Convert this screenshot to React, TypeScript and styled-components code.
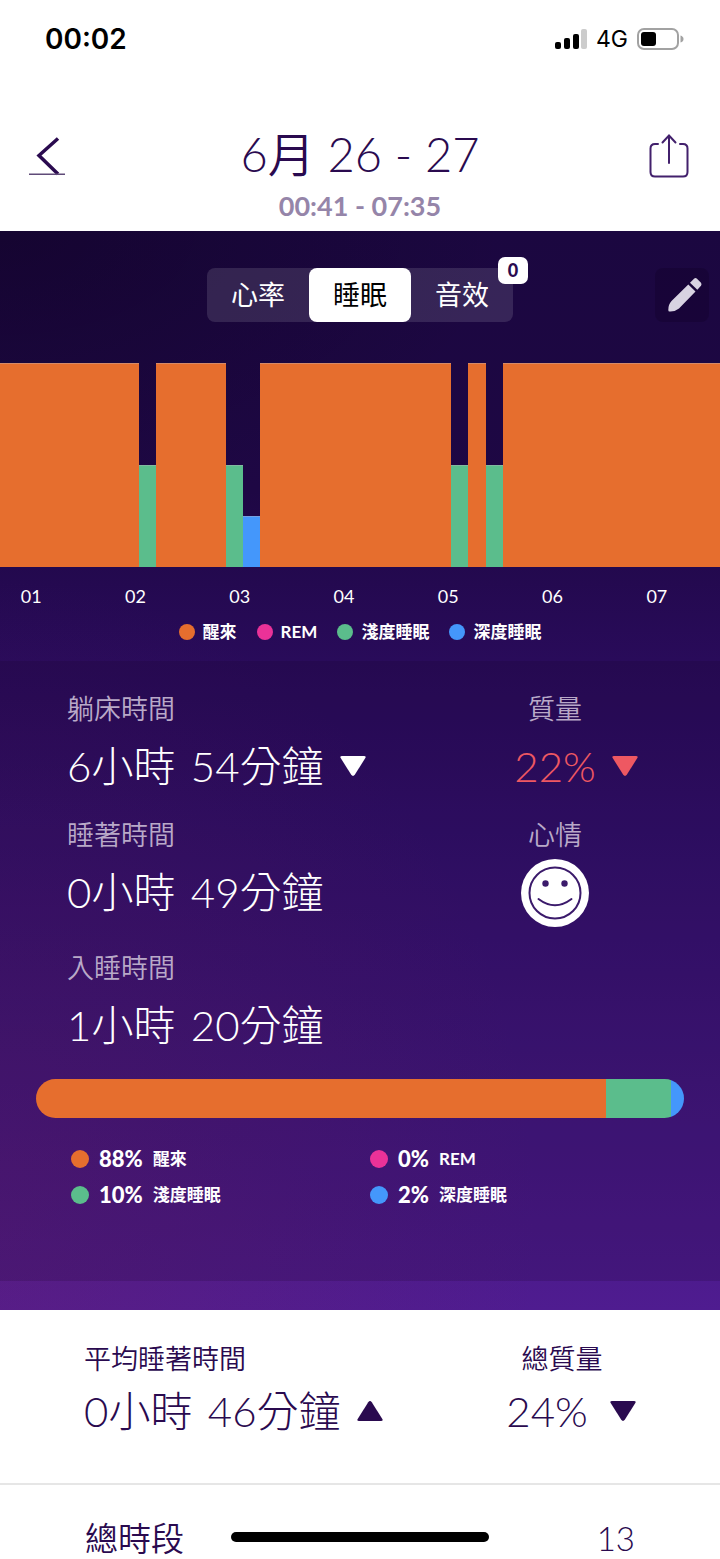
import React from "react";
import styled, { createGlobalStyle } from "styled-components";

const color = {
  ink: "#2a0a4f",
  awake: "#e66e2e",
  rem: "#ea3298",
  light: "#5bbd8c",
  deep: "#4497fb",
  alert: "#ee5862",
};

const GlobalStyle = createGlobalStyle`
  *, *::before, *::after { box-sizing: border-box; }
  body {
    margin: 0;
    background: #fff;
    color: ${color.ink};
    font-family: Lato, "Noto Sans CJK TC", sans-serif;
  }
  h1, p, dl, dt, dd, ul { margin: 0; padding: 0; }
  ul { list-style: none; }
  button { font: inherit; border: 0; padding: 0; background: none; color: inherit; cursor: pointer; }
  svg { display: block; }
`;

const Screen = styled.div`
  position: relative;
  min-width: 560px;
  overflow: hidden;
`;

const StatusBar = styled.div`
  display: flex;
  align-items: center;
  justify-content: space-between;
  height: 78px;
  padding: 0 36px 0 45px;
  color: #000;
  font-family: Inter, sans-serif;
`;

const Clock = styled.span`
  font-size: 28px;
  font-weight: 600;
`;

const StatusIcons = styled.div`
  display: flex;
  align-items: center;
  gap: 9px;
  font-size: 23px;
`;

const Header = styled.header`
  display: grid;
  grid-template-columns: 80px 1fr 72px;
  height: 153px;
  padding: 44px 15px 0 7px;
  justify-items: center;
  align-items: start;
`;

const IconButton = styled.button`
  display: flex;
  align-items: center;
  justify-content: center;
  width: 56px;
  height: 68px;
`;

const Heading = styled.div`
  text-align: center;
`;

const Title = styled.h1`
  font-size: 47px;
  line-height: 64px;
  font-weight: 350;
`;

const Period = styled.p`
  margin-top: 4px;
  font-size: 27px;
  line-height: 32px;
  font-weight: 700;
  color: #9585a9;
`;

const Night = styled.main`
  background:
    radial-gradient(ellipse 75% 60% at 0 92%, rgba(125, 35, 95, 0.2), rgba(125, 35, 95, 0)),
    radial-gradient(ellipse 70% 25% at 0 0, rgba(10, 0, 20, 0.35), rgba(10, 0, 20, 0)),
    linear-gradient(180deg, #1b0740 0, #1e0744 260px, #290b5a 430px, #32106c 600px, #42177f 850px, #4f1c90 1080px);
`;

const Toolbar = styled.div`
  display: grid;
  grid-template-columns: 1fr auto 1fr;
  align-items: center;
  padding: 37px 11px 41px;
`;

const Tabs = styled.div`
  position: relative;
  grid-column: 2;
  display: flex;
  border-radius: 8px;
  background: rgba(255, 255, 255, 0.12);
`;

const Tab = styled.button<{ $active?: boolean }>`
  width: 102px;
  height: 54px;
  border-radius: 8px;
  font-size: 27px;
  line-height: 54px;
  color: ${(p) => (p.$active ? "#000" : "#fff")};
  background: ${(p) => (p.$active ? "#fff" : "transparent")};
`;

const Badge = styled.span`
  position: absolute;
  top: -11px;
  right: -15px;
  width: 30px;
  height: 27px;
  border-radius: 7px;
  background: #fff;
  color: ${color.ink};
  font-size: 18px;
  line-height: 26px;
  font-weight: 900;
  text-align: center;
`;

const EditButton = styled.button`
  display: flex;
  align-items: center;
  justify-content: center;
  justify-self: end;
  width: 54px;
  height: 54px;
  border-radius: 8px;
  background: rgba(15, 0, 35, 0.3);
`;

const Chart = styled.div`
  display: flex;
  align-items: flex-end;
  height: 204px;
`;

const Stage = styled.div<{ $span: number; $level: number; $fill: string }>`
  flex: ${(p) => p.$span} 0 0;
  height: ${(p) => p.$level}%;
  background: ${(p) => p.$fill};
  box-shadow: inset 0 1px rgba(190, 180, 190, 0.4);
`;

const Hours = styled.div`
  display: flex;
  margin: 16px 11px 0 -21px;
  color: #fff;
  font-size: 18px;
  line-height: 26px;
`;

const Hour = styled.span`
  flex: 1 0 0;
  text-align: center;
`;

const Legend = styled.ul`
  display: flex;
  justify-content: center;
  gap: 20px;
  margin-top: 10px;
  padding-bottom: 16px;
`;

const LegendItem = styled.li`
  display: flex;
  align-items: center;
  gap: 8px;
  color: #fff;
  font-size: 17px;
  line-height: 26px;
  font-weight: 700;
`;

const Dot = styled.span<{ $fill: string; $size: number }>`
  flex: none;
  width: ${(p) => p.$size}px;
  height: ${(p) => p.$size}px;
  border-radius: 50%;
  background: ${(p) => p.$fill};
`;

const Details = styled.section`
  padding: 30px 0 72px;
  background: rgba(20, 0, 30, 0.16);
`;

const Stats = styled.dl<{ $inset: number }>`
  display: grid;
  grid-template-columns: 1fr 330px;
  row-gap: 23px;
  padding-left: ${(p) => p.$inset}px;
`;

const Stat = styled.div<{ $centered?: boolean }>`
  text-align: ${(p) => (p.$centered ? "center" : "left")};
`;

const Label = styled.dt<{ $muted?: boolean }>`
  font-size: 27px;
  line-height: 36px;
  font-weight: 350;
  color: ${(p) => (p.$muted ? "#b9a9c8" : color.ink)};
`;

const Value = styled.dd<{ $tone: string }>`
  display: flex;
  align-items: center;
  gap: 16px;
  margin-top: 11px;
  font-size: 42px;
  line-height: 56px;
  font-weight: 300;
  color: ${(p) => p.$tone};
`;

const CenteredValue = styled(Value)`
  display: grid;
  grid-template-columns: 1fr auto 1fr;
`;

const Amount = styled.span`
  grid-column: 2;
`;

const Minutes = styled.span`
  margin-left: 4px;
`;

const Mood = styled.dd`
  display: flex;
  justify-content: center;
  margin-top: 6px;
`;

const Breakdown = styled.div`
  display: flex;
  height: 39px;
  margin: 26px 36px 0;
  border-radius: 20px;
  overflow: hidden;
`;

const Share = styled.div<{ $share: number; $fill: string }>`
  flex: ${(p) => p.$share} 0 0;
  background: ${(p) => p.$fill};
`;

const Shares = styled.ul`
  display: grid;
  grid-template-columns: 299px 1fr;
  row-gap: 8px;
  margin: 27px 36px 0;
  padding-left: 35px;
`;

const ShareItem = styled(LegendItem)`
  gap: 10px;
  line-height: 28px;
`;

const Percent = styled.span`
  font-size: 22px;
  font-weight: 900;
`;

const Strip = styled.div`
  height: 29px;
`;

const Averages = styled.section`
  padding: 31px 0 44px;
  border-bottom: 2px solid #e6e6e6;
`;

const AverageStats = styled(Stats)`
  grid-template-columns: 1fr 316px;

  ${Value} { margin-top: 6px; }
  ${CenteredValue} { padding-right: 30px; gap: 22px; }
`;

const Total = styled.section`
  display: flex;
  justify-content: space-between;
  padding: 33px 85px 0;
  font-size: 33px;
  line-height: 40px;
  font-weight: 350;
`;

const HomeIndicator = styled.div`
  position: absolute;
  bottom: 16px;
  left: 50%;
  width: 258px;
  height: 10px;
  margin-left: -129px;
  border-radius: 5px;
  background: #000;
`;

const stages = [
  { span: 8, level: 100, fill: color.awake },
  { span: 1, level: 50, fill: color.light },
  { span: 4, level: 100, fill: color.awake },
  { span: 1, level: 50, fill: color.light },
  { span: 1, level: 25, fill: color.deep },
  { span: 11, level: 100, fill: color.awake },
  { span: 1, level: 50, fill: color.light },
  { span: 1, level: 100, fill: color.awake },
  { span: 1, level: 50, fill: color.light },
  { span: 12.5, level: 100, fill: color.awake },
];

const shares = [
  { name: "醒來", percent: 88, fill: color.awake },
  { name: "REM", percent: 0, fill: color.rem },
  { name: "淺度睡眠", percent: 10, fill: color.light },
  { name: "深度睡眠", percent: 2, fill: color.deep },
];

const hours = ["01", "02", "03", "04", "05", "06", "07"];

function Triangle({ up }: { up?: boolean }) {
  return (
    <svg width="26" height="20" viewBox="0 0 26 20" fill="currentColor" aria-hidden="true">
      <path
        d="M2 0H24Q26.500 0 25.300 2L14.800 18.800Q13 21 11.200 18.800L.7 2Q-.5 0 2 0Z"
        transform={up ? "rotate(180 13 10)" : undefined}
      />
    </svg>
  );
}

function Duration({ h, m }: { h: number; m: number }) {
  return (
    <span>
      {h}小時 <Minutes>{m}分鐘</Minutes>
    </span>
  );
}

export default function App() {
  return (
    <Screen>
      <GlobalStyle />
      <StatusBar>
        <Clock>00:02</Clock>
        <StatusIcons>
          <svg width="33" height="21" viewBox="0 0 33 21" aria-hidden="true">
            <rect x="1" y="13" width="6" height="7" rx="2" />
            <rect x="10" y="9" width="6" height="11" rx="2" />
            <rect x="19" y="5" width="6" height="15" rx="2" />
            <rect x="27" y="0" width="6" height="20" rx="2" fill="#ccc" />
          </svg>
          <span>4G</span>
          <svg width="47" height="22" viewBox="0 0 47 22" aria-hidden="true">
            <rect x="1" y="1" width="40" height="20" rx="6" fill="none" stroke="#a2a2a2" strokeWidth="2" />
            <rect x="4" y="4" width="15" height="14" rx="3" />
            <path d="M43.500 7.500Q46.500 8.500 46.500 11T43.500 14.500Z" fill="#a2a2a2" />
          </svg>
        </StatusIcons>
      </StatusBar>

      <Header>
        <IconButton aria-label="Back">
          <svg width="38" height="42" viewBox="0 0 38 42" fill="none" aria-hidden="true">
            <path d="M30 3.500L11 20.500L30 39" stroke={color.ink} strokeWidth="3.500" />
            <path d="M1 39.300H37" stroke="#5f4a78" strokeWidth="1.500" />
          </svg>
        </IconButton>
        <Heading>
          <Title>6月 26 - 27</Title>
          <Period>00:41 - 07:35</Period>
        </Heading>
        <IconButton aria-label="Share">
          <svg width="40" height="44" viewBox="0 0 40 44" fill="none" stroke="#42206c" strokeWidth="2" strokeLinecap="round" aria-hidden="true">
            <path d="M9 10H6Q1.500 10 1.500 14.500V38Q1.500 42.500 6 42.500H34Q38.500 42.500 38.500 38V14.500Q38.500 10 34 10H31" />
            <path d="M20 29V1.500M13.500 8.500L20 1.500L26.500 8.500" />
          </svg>
        </IconButton>
      </Header>

      <Night>
        <Toolbar>
          <Tabs>
            <Tab>心率</Tab>
            <Tab $active aria-pressed="true">睡眠</Tab>
            <Tab>音效</Tab>
            <Badge>0</Badge>
          </Tabs>
          <EditButton aria-label="Edit">
            <svg width="40" height="36" viewBox="-6 0 40 36" fill="#d8d3e2" aria-hidden="true">
              <path d="M20.300 7.500L27.500 14.500L11 31.500Q7 34.800 1.500 34.500Q.3 34.500 .3 33Q.2 27.500 3.500 24Z" />
              <path d="M22 5.700L26 1.700Q27.500 .5 29 1.700L33 5.700Q34 7 33 8.700L29.300 12.700Z" />
            </svg>
          </EditButton>
        </Toolbar>

        <Chart role="img" aria-label="睡眠">
          {stages.map((s, i) => (
            <Stage key={i} $span={s.span} $level={s.level} $fill={s.fill} />
          ))}
        </Chart>
        <Hours>
          {hours.map((h) => (
            <Hour key={h}>{h}</Hour>
          ))}
        </Hours>
        <Legend>
          {shares.map((s) => (
            <LegendItem key={s.name}>
              <Dot $fill={s.fill} $size={16} />
              {s.name}
            </LegendItem>
          ))}
        </Legend>

        <Details>
          <Stats $inset={67}>
            <Stat>
              <Label $muted>躺床時間</Label>
              <Value $tone="#fff">
                <Duration h={6} m={54} />
                <Triangle />
              </Value>
            </Stat>
            <Stat $centered>
              <Label $muted>質量</Label>
              <CenteredValue $tone={color.alert}>
                <Amount>22%</Amount>
                <Triangle />
              </CenteredValue>
            </Stat>
            <Stat>
              <Label $muted>睡著時間</Label>
              <Value $tone="#fff">
                <Duration h={0} m={49} />
              </Value>
            </Stat>
            <Stat $centered>
              <Label $muted>心情</Label>
              <Mood>
                <svg width="68" height="68" viewBox="0 0 68 68" fill="none" stroke="#3b1a6b" strokeWidth="2" role="img" aria-label="Happy">
                  <circle cx="34" cy="34" r="34" fill="#fff" stroke="none" />
                  <circle cx="34" cy="34" r="25.500" />
                  <circle cx="24.500" cy="24.500" r="3.200" fill="#3b1a6b" stroke="none" />
                  <circle cx="43.500" cy="24.500" r="3.200" fill="#3b1a6b" stroke="none" />
                  <path d="M17.500 40Q34 52.500 50.500 40" strokeLinecap="round" />
                </svg>
              </Mood>
            </Stat>
            <Stat>
              <Label $muted>入睡時間</Label>
              <Value $tone="#fff">
                <Duration h={1} m={20} />
              </Value>
            </Stat>
          </Stats>

          <Breakdown>
            {shares.map((s) => (
              <Share key={s.name} $share={s.percent} $fill={s.fill} />
            ))}
          </Breakdown>
          <Shares>
            {shares.map((s) => (
              <ShareItem key={s.name}>
                <Dot $fill={s.fill} $size={18} />
                <Percent>{s.percent}%</Percent>
                {s.name}
              </ShareItem>
            ))}
          </Shares>
        </Details>
        <Strip />
      </Night>

      <Averages>
        <AverageStats $inset={84}>
          <Stat>
            <Label>平均睡著時間</Label>
            <Value $tone={color.ink}>
              <Duration h={0} m={46} />
              <Triangle up />
            </Value>
          </Stat>
          <Stat $centered>
            <Label>總質量</Label>
            <CenteredValue $tone={color.ink}>
              <Amount>24%</Amount>
              <Triangle />
            </CenteredValue>
          </Stat>
        </AverageStats>
      </Averages>
      <Total>
        <span>總時段</span>
        <span>13</span>
      </Total>
      <HomeIndicator />
    </Screen>
  );
}
